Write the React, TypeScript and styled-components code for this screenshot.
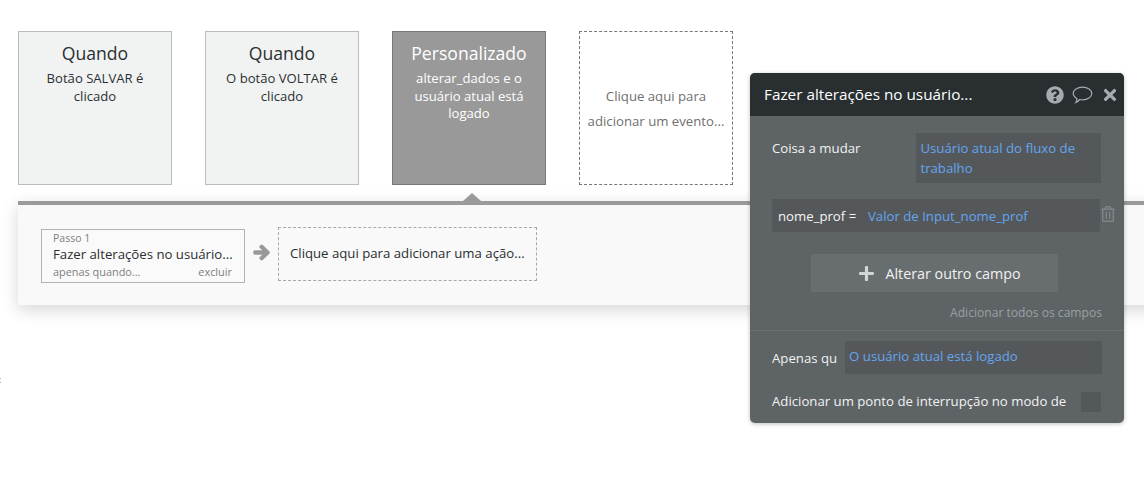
import styled, {createGlobalStyle} from 'styled-components';
import {FaArrowRight, FaPlus, FaQuestionCircle, FaRegTrashAlt, FaTimes} from 'react-icons/fa';

const GlobalStyle = createGlobalStyle`
    html, body {
        margin: 0;
        height: 100%;
        overflow: hidden;
        background: #fff;
    }
    body {
        font-family: 'Open Sans', 'Liberation Sans', sans-serif;
    }
`;

const events = [
    {title: 'Quando', text: 'Botão SALVAR é clicado'},
    {title: 'Quando', text: 'O botão VOLTAR é clicado'},
    {title: 'Personalizado', text: 'alterar_dados e o usuário atual está logado', active: true},
];

const CommentIcon = () => (
    <svg width="21" height="18" viewBox="0 0 21 18" fill="none" stroke="currentColor" strokeWidth="1.2">
        <path d="M10.5 1.2c5 0 9.3 2.7 9.3 6.3s-4.3 6.3-9.3 6.3c-1 0-1.9-.1-2.8-.3-1 1.2-2.4 2.4-3.9 3 .6-1 1.1-2.3 1.2-3.8C2.800 11.100 1.200 9.500 1.200 7.500c0-3.600 4.300-6.300 9.300-6.300z" />
    </svg>
);

const App = () => {
    return (
        <Page>
            <GlobalStyle />
            <EventRow>
                {events.map((event) => (
                    <EventCard key={event.text} $active={event.active}>
                        <EventTitle>{event.title}</EventTitle>
                        <EventText>{event.text}</EventText>
                    </EventCard>
                ))}
                <AddEvent>Clique aqui para adicionar um evento...</AddEvent>
            </EventRow>

            <ActionPanel>
                <Pointer />
                <StepBox>
                    <StepLabel>Passo 1</StepLabel>
                    <StepName>Fazer alterações no usuário...</StepName>
                    <StepFooter>
                        <span>apenas quando...</span>
                        <span>excluir</span>
                    </StepFooter>
                </StepBox>
                <StepArrow>
                    <FaArrowRight />
                </StepArrow>
                <AddAction>Clique aqui para adicionar uma ação...</AddAction>
            </ActionPanel>

            <EdgeMark />

            <Editor>
                <EditorHeader>
                    <EditorTitle>Fazer alterações no usuário...</EditorTitle>
                    <HeaderIcons>
                        <FaQuestionCircle size={18} />
                        <CommentIcon />
                        <FaTimes size={18} />
                    </HeaderIcons>
                </EditorHeader>
                <EditorBody>
                    <ThingRow>
                        <ThingLabel>Coisa a mudar</ThingLabel>
                        <ThingValue>Usuário atual do fluxo de trabalho</ThingValue>
                    </ThingRow>
                    <FieldRow>
                        <FieldBox>
                            <FieldName>nome_prof =</FieldName>
                            <DynamicText>Valor de Input_nome_prof</DynamicText>
                        </FieldBox>
                        <TrashIcon>
                            <FaRegTrashAlt size={16} />
                        </TrashIcon>
                    </FieldRow>
                    <AddFieldButton>
                        <FaPlus size={17} />
                        Alterar outro campo
                    </AddFieldButton>
                    <AddAllFields>Adicionar todos os campos</AddAllFields>
                </EditorBody>
                <EditorFooter>
                    <ConditionRow>
                        <Label>Apenas qu</Label>
                        <ConditionValue>O usuário atual está logado</ConditionValue>
                    </ConditionRow>
                    <BreakpointRow>
                        <BreakpointLabel>Adicionar um ponto de interrupção no modo de</BreakpointLabel>
                        <Checkbox />
                    </BreakpointRow>
                </EditorFooter>
            </Editor>
        </Page>
    );
};

export default App;

const Page = styled.div`
    position: relative;
    width: 1144px;
    height: 479px;
    overflow: hidden;
    padding: 31px 0 0 18px;
    box-sizing: border-box;
    color: #2b2b2b;
`;

const EventRow = styled.div`
    display: flex;
    gap: 33px;
`;

const EventCard = styled.div<{$active?: boolean}>`
    width: 154px;
    height: 154px;
    box-sizing: border-box;
    padding: 9px 8px 0;
    text-align: center;
    background: ${({$active}) => ($active ? '#999999' : '#f1f3f3')};
    border: 1px solid ${({$active}) => ($active ? '#777777' : '#b9bdbd')};
    color: ${({$active}) => ($active ? '#ffffff' : '#2b2f31')};
`;

const EventTitle = styled.div`
    font-size: 17.6px;
    line-height: 24px;
`;

const EventText = styled.div`
    margin-top: 5px;
    font-size: 13.1px;
    line-height: 17.5px;
`;

const AddEvent = styled.div`
    width: 154px;
    height: 154px;
    box-sizing: border-box;
    display: flex;
    align-items: center;
    justify-content: center;
    padding: 2px 4px 0;
    text-align: center;
    border: 1px dashed #777777;
    color: #6f6f6f;
    font-size: 13.2px;
    line-height: 25px;
`;

const ActionPanel = styled.div`
    position: relative;
    display: flex;
    align-items: flex-start;
    width: 1200px;
    height: 104px;
    box-sizing: border-box;
    margin-top: 16px;
    padding: 22px 0 0 23px;
    background: #f9f9f9;
    border-top: 4px solid #9a9a9a;
    box-shadow: 0 5px 16px rgba(0, 0, 0, 0.16);
`;

const Pointer = styled.div`
    position: absolute;
    top: -12px;
    left: 445px;
    width: 0;
    height: 0;
    border-left: 9px solid transparent;
    border-right: 9px solid transparent;
    border-bottom: 8px solid #9a9a9a;
`;

const EdgeMark = styled.div`
    position: absolute;
    top: 378px;
    left: 0;
    width: 1px;
    height: 5px;
    border-top: 1px solid #b5b5b5;
    border-bottom: 1px solid #b5b5b5;
    box-sizing: border-box;
`;

const StepBox = styled.div`
    width: 204px;
    height: 54px;
    box-sizing: border-box;
    margin-top: 2px;
    padding: 1px 12px 0 11px;
    background: #fafafa;
    border: 1px solid #b0b4b4;
`;

const StepLabel = styled.div`
    font-size: 10.5px;
    line-height: 14px;
    color: #7d7d7d;
`;

const StepName = styled.div`
    font-size: 13.2px;
    line-height: 18px;
    white-space: nowrap;
    color: #2b2f31;
`;

const StepFooter = styled.div`
    display: flex;
    justify-content: space-between;
    margin-top: 1px;
    font-size: 10.9px;
    line-height: 15px;
    color: #7d7d7d;
`;

const StepArrow = styled.div`
    display: flex;
    width: 33px;
    height: 50px;
    align-items: center;
    padding-left: 8px;
    box-sizing: border-box;
    font-size: 17px;
    color: #999999;
    svg {
        stroke: currentColor;
        stroke-width: 50;
    }
`;

const AddAction = styled.div`
    width: 259px;
    height: 54px;
    box-sizing: border-box;
    padding-left: 11px;
    display: flex;
    align-items: center;
    border: 1px dashed #a8a8a8;
    font-size: 13.2px;
    color: #2b2f31;
    padding-bottom: 3px;
`;

const Editor = styled.div`
    position: absolute;
    top: 73px;
    left: 750px;
    width: 374px;
    height: 350px;
    border-radius: 5px;
    background: #5e6366;
    color: #f2f2f2;
    font-size: 13.2px;
    overflow: hidden;
    box-shadow: 0 1px 4px rgba(0, 0, 0, 0.25);
`;

const EditorHeader = styled.div`
    display: flex;
    align-items: center;
    justify-content: space-between;
    height: 43px;
    padding: 1px 5px 0 14px;
    box-sizing: border-box;
    background: #292f31;
`;

const EditorTitle = styled.div`
    margin-top: -2px;
    font-size: 15.3px;
    color: #ffffff;
`;

const HeaderIcons = styled.div`
    display: flex;
    align-items: center;
    gap: 8px;
    color: #a5abae;
`;

const EditorBody = styled.div`
    padding: 17px 0 0 22px;
    height: 215px;
    box-sizing: border-box;
    border-bottom: 1px solid #6b7073;
`;

const ThingRow = styled.div`
    display: flex;
    align-items: flex-start;
`;

const Label = styled.span`
    line-height: 20px;
    white-space: nowrap;
`;

const ThingLabel = styled(Label)`
    margin-top: 5px;
`;

const BreakpointLabel = styled(Label)`
    margin-bottom: 2px;
`;

const ThingValue = styled.div`
    width: 185px;
    box-sizing: border-box;
    margin-left: 56px;
    padding: 5px 5px 5px 4px;
    line-height: 20px;
    background: #54585b;
    color: #64a5f0;
`;

const FieldRow = styled.div`
    display: flex;
    align-items: center;
    margin-top: 16px;
`;

const FieldBox = styled.div`
    display: flex;
    align-items: center;
    width: 328px;
    height: 33px;
    box-sizing: border-box;
    padding-left: 6px;
    background: #54585b;
`;

const FieldName = styled.span`
    width: 90px;
    color: #f5f5f5;
`;

const DynamicText = styled.span`
    color: #64a5f0;
`;

const TrashIcon = styled.div`
    display: flex;
    margin-top: -3px;
    color: #7e8386;
`;

const AddFieldButton = styled.div`
    display: flex;
    align-items: center;
    justify-content: center;
    gap: 10px;
    width: 247px;
    height: 38px;
    box-sizing: border-box;
    margin: 22px 0 0 39px;
    padding-left: 10px;
    border: 1px solid #6b7073;
    border-radius: 2px;
    background: #686d70;
    font-size: 14.3px;
    font-weight: 500;
    svg {
        color: #d2d4d5;
    }
`;

const AddAllFields = styled.div`
    width: 330px;
    margin-top: 12px;
    text-align: right;
    font-size: 12.1px;
    color: #9ba0a3;
`;

const EditorFooter = styled.div`
    padding: 10px 23px 0 22px;
`;

const ConditionRow = styled.div`
    display: flex;
    align-items: center;
`;

const ConditionValue = styled.div`
    flex: 0 0 257px;
    height: 33px;
    box-sizing: border-box;
    margin-left: 8px;
    padding-left: 4px;
    line-height: 30px;
    background: #54585b;
    color: #64a5f0;
`;

const BreakpointRow = styled.div`
    display: flex;
    align-items: center;
    justify-content: space-between;
    margin-top: 17px;
`;

const Checkbox = styled.div`
    width: 20px;
    height: 20px;
    background: #54585b;
`;
